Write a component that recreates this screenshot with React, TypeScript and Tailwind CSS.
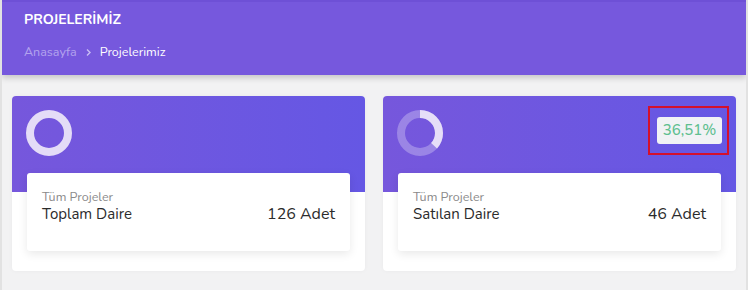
import React from "react";

function Ring({ pct }: { pct?: number }) {
  const r = 19;
  const c = 2 * Math.PI * r;
  return (
    <svg width="48" height="48" viewBox="0 0 48 48">
      {pct === undefined ? (
        <circle cx="24" cy="24" r={r} fill="none" stroke="#e4dcf7" strokeWidth="8" />
      ) : (
        <>
          <circle cx="24" cy="24" r={r} fill="none" stroke="rgba(255,255,255,0.28)" strokeWidth="8" />
          <circle
            cx="24"
            cy="24"
            r={r}
            fill="none"
            stroke="#e6def8"
            strokeWidth="8"
            strokeDasharray={`${(c * pct) / 100} ${c}`}
            transform="rotate(-90 24 24)"
          />
        </>
      )}
    </svg>
  );
}

function Card({
  title,
  amount,
  pct,
}: {
  title: string;
  amount: string;
  pct?: number;
}) {
  return (
    <div className="relative h-[175px] rounded-[4px] bg-white shadow-[0_0_4px_rgba(0,0,0,0.04)]">
      <div className="flex h-[96px] items-start justify-between rounded-t-[4px] bg-gradient-to-r from-[#7657dc] to-[#6557e4] pl-[13px] pr-[14px] pt-[13px]">
        <Ring pct={pct} />
        {pct !== undefined && (
          <div className="relative mt-[8px]">
            <div className="flex h-[27px] w-[65px] items-center justify-center rounded-[3px] bg-[#f1f2f5] text-[15px] font-medium text-[#5fbf90]">
              36,51%
            </div>
            <div className="absolute -left-[9px] -top-[11px] h-[49px] w-[81px] border-2 border-[#d4102c]" />
          </div>
        )}
      </div>
      <div className="-mt-[19px] mx-[15px] h-[78px] rounded-[3px] bg-white px-[15px] pt-[16px] shadow-[0_3px_10px_rgba(0,0,0,0.09)]">
        <div className="text-[12.5px] leading-[16px] text-[#8a8a8a]">Tüm Projeler</div>
        <div className="flex items-baseline justify-between">
          <div className="text-[15px] leading-[19px] text-[#2b2b2b]">{title}</div>
          <div className="text-[16px] leading-[19px] text-[#2b2b2b]">{amount}</div>
        </div>
      </div>
    </div>
  );
}

export default function App() {
  return (
    <div
      className="h-[290px] w-[748px] overflow-hidden border-x-2 border-[#e2e2e2] bg-[#f2f2f3]"
      style={{ fontFamily: "Nunito, Lato, 'Open Sans', sans-serif" }}
    >
      <div className="relative h-[75px] border-t-2 border-[#6e50d6] bg-[#7658dd] pl-[22px] pt-[8px] shadow-[0_3px_6px_rgba(0,0,0,0.18)]">
        <div className="text-[14px] font-bold leading-[20px] text-white">PROJELERİMİZ</div>
        <div className="mt-[14px] flex items-center text-[12.5px] leading-[16px]">
          <span className="text-[#b3a3ee]">Anasayfa</span>
          <svg className="mx-[8px]" width="7" height="9" viewBox="0 0 7 9">
            <path d="M2 1.5 L5 4.5 L2 7.5" fill="none" stroke="#c9bdf4" strokeWidth="1.4" />
          </svg>
          <span className="text-white">Projelerimiz</span>
        </div>
      </div>
      <div className="grid grid-cols-2 gap-[18px] pl-[10px] pr-[10px] pt-[21px]">
        <Card title="Toplam Daire" amount="126 Adet" />
        <Card title="Satılan Daire" amount="46 Adet" pct={36.51} />
      </div>
    </div>
  );
}
